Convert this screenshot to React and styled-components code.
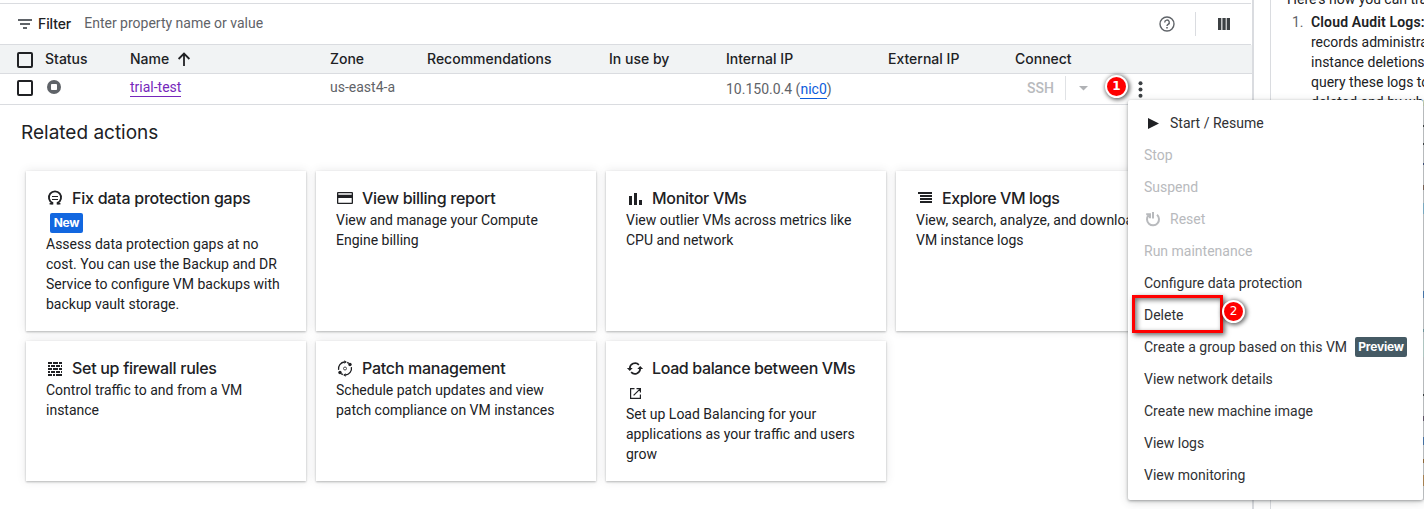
import React from "react";
import styled, { createGlobalStyle } from "styled-components";

const Global = createGlobalStyle`
  * { box-sizing: border-box; }
  body { margin: 0; background: #fff; overflow: hidden; font-family: Roboto, "Liberation Sans", sans-serif; font-size: 14px; line-height: 20px; color: #202124; }
`;
const heading = `font-family: "Product Sans", "Google Sans", Inter, Roboto, sans-serif;`;

const Page = styled.div`
  position: relative;
  display: flex;
  width: 1424px;
  height: 509px;
  overflow: hidden;
  background: #fff;
`;
const Main = styled.main`
  width: 1254px;
  flex: none;
  padding-top: 3px;
  border-right: 2px solid #dadce0;
`;
const FilterBar = styled.div`
  display: flex;
  align-items: center;
  height: 42px;
  border: solid #dadce0;
  border-width: 1px 0;
  margin-right: 1px;
  padding: 0 18px 0 16px;
`;
const FilterLabel = styled.span`
  ${heading}
  font-weight: 500;
  font-size: 14px;
  letter-spacing: -0.1px;
  margin: 0 13px 0 4px;
`;
const Placeholder = styled.span`
  color: #5f6368;
  flex: 1;
  margin-top: -2px;
`;
const ToolDivider = styled.i`
  width: 1px;
  height: 24px;
  background: #dadce0;
  margin: 0 19px 0 19px;
`;
const Row = styled.div`
  display: grid;
  grid-template-columns: 28px 85px 200px 97px 182px 117px 162px 127px 1fr;
  align-items: center;
  height: ${(p) => (p.$head ? 29 : 31)}px;
  padding: 0 0 ${(p) => (p.$head ? 0 : 4)}px 17px;
  margin-right: ${(p) => (p.$head ? 0 : 1)}px;
  background: ${(p) => (p.$head ? "#f1f3f4" : "#fff")};
  border-bottom: 1px solid #dadce0;
  color: #5f6368;
`;
const HeadCell = styled.span`
  ${heading}
  display: flex;
  align-items: center;
  gap: 6px;
  font-weight: 500;
  font-size: 14px;
  color: #202124;
  white-space: nowrap;
`;
const Checkbox = styled.span`
  width: 16px;
  height: 16px;
  margin-top: 2px;
  border: 2px solid #202124;
  border-radius: 2px;
`;
const StatusIcon = styled.svg`
  margin-left: 2px;
`;
const Cell = styled.span`
  white-space: nowrap;
  padding-top: ${(p) => p.$drop || 0}px;
`;
const Link = styled.a`
  display: inline-block;
  line-height: 18px;
  color: ${(p) => (p.$visited ? "#7627bb" : "#0b5bdc")};
  border-bottom: 1px solid currentColor;
`;
const Connect = styled.div`
  display: flex;
  align-items: center;
  color: #b8babd;
  font-weight: 500;
  margin-top: 2px;
  padding-left: 12px;
`;
const ConnectDivider = styled.i`
  width: 1px;
  height: 24px;
  background: #e0e2e5;
  margin: 0 13px 0 11px;
`;
const MoreIcon = styled.svg`
  margin: 2px 0 0 50px;
`;
const SectionTitle = styled.h2`
  ${heading}
  margin: 16px 0 0 21px;
  font-weight: 400;
  font-size: 19px;
  line-height: 24px;
`;
const Cards = styled.div`
  display: grid;
  grid-template-columns: repeat(4, 280px);
  grid-template-rows: 160px 140px;
  gap: 10px;
  padding: 26px 0 0 26px;
`;
const Card = styled.section`
  padding: 15px 20px;
  background: #fff;
  box-shadow: 0 1px 2px rgba(60, 64, 67, 0.35), 0 0 9px rgba(60, 64, 67, 0.13);
`;
const CardTitle = styled.h3`
  ${heading}
  display: flex;
  align-items: center;
  gap: 8px;
  height: 24px;
  margin: 0;
  font-size: 16px;
  font-weight: 500;
  white-space: nowrap;
  letter-spacing: ${(p) => p.$ls || 0}px;
  svg { flex: none; }
`;
const CardExtra = styled.div`
  display: flex;
  align-items: center;
  height: 24px;
  padding: 2px 0 0 4px;
`;
const Text = styled.p`
  margin: 0;
  white-space: pre;
`;
const Tag = styled.span`
  ${heading}
  display: inline-block;
  height: 20px;
  border-radius: 2px;
  background: ${(p) => (p.$dark ? "#455a64" : "#1267e0")};
  color: #fff;
  font-size: 12px;
  font-weight: 700;
  line-height: 20px;
  text-align: center;
  width: ${(p) => (p.$dark ? 52 : 33)}px;
  letter-spacing: -0.2px;
`;
const Aside = styled.aside`
  flex: none;
  width: 154px;
  margin-left: 16px;
  padding-left: 16px;
  border-left: 1px solid #dadce0;
  overflow: hidden;
  white-space: nowrap;
`;
const Intro = styled.p`
  margin: -11px 0 3px;
`;
const Numbered = styled.div`
  display: grid;
  grid-template-columns: 19px auto;
  padding-left: 5px;
`;
const Num = styled.span`
  color: #5f6368;
`;
const Strong = styled.b`
  font-weight: 600;
  letter-spacing: 0.15px;
`;
const Menu = styled.ul`
  position: absolute;
  left: 1128px;
  top: 100px;
  width: 295px;
  height: 400px;
  margin: 0;
  padding: 7px 0;
  list-style: none;
  background: #fff;
  border-radius: 2px;
  box-shadow: 0 1px 3px rgba(60, 64, 67, 0.45), 0 2px 10px rgba(60, 64, 67, 0.2);
`;
const Item = styled.li`
  display: flex;
  align-items: center;
  gap: 8px;
  height: 32px;
  padding-left: 16px;
  white-space: nowrap;
  color: ${(p) => (p.$off ? "#b8babd" : "#303134")};
`;
const Highlight = styled.div`
  position: absolute;
  left: 1132px;
  top: 295px;
  width: 91px;
  height: 38px;
  border: 3px solid #f00;
  box-shadow: 2px 2px 5px rgba(0, 0, 0, 0.6), inset 2px 2px 5px rgba(0, 0, 0, 0.55);
`;
const Step = styled.span`
  position: absolute;
  left: ${(p) => p.$x}px;
  top: ${(p) => p.$y}px;
  width: 23px;
  height: 23px;
  border: 2px solid #fff;
  border-radius: 50%;
  background: #f00;
  box-shadow: 1px 1px 4px 1px rgba(0, 0, 0, 0.6);
  color: #fff;
  font: ${(p) => (p.$bold ? "bold" : "normal")} 12px/19px "DejaVu Sans", sans-serif;
  text-align: center;
`;
const Edge = styled.div`
  position: absolute;
  left: 1423px;
  top: 100px;
  width: 1px;
  height: 400px;
  background: #dfe1e4;
`;
const Mark = styled.i`
  display: block;
  height: ${(p) => p.$h}px;
  margin-top: ${(p) => p.$gap}px;
  background: ${(p) => p.$c};
`;

const Icon = ({ size = 18, children, ...rest }) => (
  <svg width={size} height={size} viewBox="0 0 18 18" fill="#202124" {...rest}>{children}</svg>
);
const icons = {
  data: (
    <g fill="none" stroke="#202124" strokeWidth="1.8">
      <path d="M6.4 15.4V13.9A6.1 6.1 0 1 1 11.6 13.9V15.4" />
      <path d="M3.6 14.7H6.4M11.6 14.7H14.4" strokeWidth="1.4" />
      <path d="M6 7.5H12M6 10.5H12" strokeWidth="1.2" />
    </g>
  ),
  card: <path fillRule="evenodd" d="M2 3h14a1 1 0 0 1 1 1v10a1 1 0 0 1-1 1H2a1 1 0 0 1-1-1V4a1 1 0 0 1 1-1zM2.3 4.2v1.6h13.4V4.2zM2.3 9v4.8h13.4V9z" />,
  bars: <path d="M3 7h3v9H3zM8 4h3v12H8zM13 11h3v5h-3z" />,
  logs: <path d="M2 3h14v2H2zM4 6h12v2H4zM4 9h12v2H4zM4 12h12v2H4z" />,
  wall: <path d="M2 3h4v2H2zM7 3h5v2H7zM13 3h3v2h-3zM2 6h2v2H2zM5 6h4v2H5zM10 6h4v2h-4zM15 6h1v2h-1zM2 9h4v2H2zM7 9h5v2H7zM13 9h3v2h-3zM2 12h2v2H2zM5 12h4v2H5zM10 12h4v2h-4zM15 12h1v2h-1zM2 15h4v2H2zM7 15h2v2H7zM10 15h6v2h-6z" />,
  patch: (
    <g>
      <g fill="none" stroke="#202124" strokeWidth="1.3">
        <path d="M2.6 10.8A6.6 6.6 0 0 1 8.6 3M15.4 8.2A6.6 6.6 0 0 1 9.4 16" />
        <path d="M11.2 3.4 12.8 4.4M5.2 14.6 6.8 15.6" />
        <circle cx="9" cy="9.5" r="1.5" strokeWidth="0.8" />
      </g>
      <circle cx="14" cy="5.5" r="1.7" /><circle cx="4" cy="13.5" r="1.7" />
      <path d="M8.3 1.2 10.9 3 8.3 4.8zM9.7 14.2 7.1 16 9.7 17.8z" />
    </g>
  ),
  balance: (
    <g>
      <path d="M3.8 9.5A5.3 5.3 0 0 1 12.9 5.8M14.2 9.5A5.3 5.3 0 0 1 5.1 13.2" fill="none" stroke="#202124" strokeWidth="1.7" />
      <path d="M.9 9h5.8L3.8 12zM11.3 10h5.8L14.2 7z" />
    </g>
  ),
};

const cards = [
  { icon: "data", title: "Fix data protection gaps", ls: -0.25, tag: true, text: "Assess data protection gaps at no\ncost. You can use the Backup and DR\nService to configure VM backups with\nbackup vault storage." },
  { icon: "card", title: "View billing report", ls: -0.27, text: "View and manage your Compute\nEngine billing" },
  { icon: "bars", title: "Monitor VMs", ls: -0.3, text: "View outlier VMs across metrics like\nCPU and network" },
  { icon: "logs", title: "Explore VM logs", ls: -0.45, text: "View, search, analyze, and download\nVM instance logs" },
  { icon: "wall", title: "Set up firewall rules", ls: -0.3, text: "Control traffic to and from a VM\ninstance" },
  { icon: "patch", title: "Patch management", ls: -0.27, text: "Schedule patch updates and view\npatch compliance on VM instances" },
  { icon: "balance", title: "Load balance between VMs", ls: -0.37, external: true, text: "Set up Load Balancing for your\napplications as your traffic and users\ngrow" },
];
const marks = [
  [0, 6, "#d5e0c0"], [19, 2, "#3c4043"], [16, 2, "#3c4043"], [18, 2, "#3c4f86"], [20, 5, "#8a6a5a"],
  [13, 11, "#8ecbe8"], [77, 7, "#4a86c8"], [31, 3, "#7fb0b8"], [7, 18, "#d3efea"], [37, 2, "#3c4043"],
  [20, 5, "#6a5a72"], [16, 8, "#4a80c0"], [14, 4, "#a8763c"], [12, 11, "#c9975a"],
];

export default function App() {
  return (
    <Page>
      <Global />
      <Main>
        <FilterBar>
          <Icon fill="#5f6368"><path d="M2 4h14v2H2zM4 8h10v2H4zM7 12h4v2H7z" /></Icon>
          <FilterLabel>Filter</FilterLabel>
          <Placeholder>Enter property name or value</Placeholder>
          <Icon>
            <circle cx="9" cy="9" r="7" fill="none" stroke="#5f6368" strokeWidth="1.4" />
            <path d="M6.7 7.4a2.3 2.3 0 1 1 3.4 2c-.8.5-1.1.8-1.1 1.7" fill="none" stroke="#5f6368" strokeWidth="1.4" />
            <path d="M8.2 12h1.6v1.6H8.2z" fill="#5f6368" />
          </Icon>
          <ToolDivider />
          <Icon fill="#3c4043"><path d="M3 3h3.3v12H3zM7.4 3h3.3v12H7.4zM11.7 3H15v12h-3.3z" /></Icon>
        </FilterBar>
        <Row $head>
          <Checkbox />
          <HeadCell>Status</HeadCell>
          <HeadCell>Name
            <Icon><path d="M9 16V3.5M3.6 9 9 3.6 14.4 9" fill="none" stroke="#202124" strokeWidth="1.8" /></Icon>
          </HeadCell>
          <HeadCell>Zone</HeadCell>
          <HeadCell>Recommendations</HeadCell>
          <HeadCell>In use by</HeadCell>
          <HeadCell>Internal IP</HeadCell>
          <HeadCell>External IP</HeadCell>
          <HeadCell>Connect</HeadCell>
        </Row>
        <Row>
          <Checkbox />
          <StatusIcon width="14" height="14" viewBox="0 0 14 14">
            <circle cx="7" cy="7" r="7" fill="#5f6368" />
            <rect x="4" y="4" width="6" height="6" rx="0.8" fill="#fff" />
          </StatusIcon>
          <Cell><Link $visited>trial-test</Link></Cell>
          <Cell>us-east4-a</Cell>
          <span />
          <span />
          <Cell $drop={3}>10.150.0.4 (<Link>nic0</Link>)</Cell>
          <span />
          <Connect>
            SSH
            <ConnectDivider />
            <svg width="9" height="5" viewBox="0 0 9 5"><path d="M0 0h9L4.5 4.5z" fill="#b0b2b5" /></svg>
            <MoreIcon width="5" height="17" viewBox="0 0 5 17" fill="#3c4043">
              <circle cx="2.5" cy="2.3" r="2" /><circle cx="2.5" cy="8.5" r="2" /><circle cx="2.5" cy="14.7" r="2" />
            </MoreIcon>
          </Connect>
        </Row>
        <SectionTitle>Related actions</SectionTitle>
        <Cards>
          {cards.map((c) => (
            <Card key={c.title}>
              <CardTitle $ls={c.ls}><Icon>{icons[c.icon]}</Icon>{c.title}</CardTitle>
              {c.tag && <CardExtra><Tag>New</Tag></CardExtra>}
              {c.external && (
                <CardExtra>
                  <svg width="11" height="11" viewBox="0 0 11 11" fill="none" stroke="#202124" strokeWidth="1.2">
                    <path d="M4.5.6H.6v9.8h9.8V6.5M6.5.6h3.9v3.9M10.2.8 3.6 7.4" />
                  </svg>
                </CardExtra>
              )}
              <Text>{c.text}</Text>
            </Card>
          ))}
        </Cards>
      </Main>
      <Aside>
        <Intro>Here's how you can track</Intro>
        <Numbered>
          <Num>1.</Num>
          <div>
            <Strong>Cloud Audit Logs:</Strong><br />
            records administrative<br />
            instance deletions.<br />
            query these logs to<br />
            deleted and by whom
          </div>
        </Numbered>
      </Aside>
      <Edge>{marks.map(([gap, h, c], i) => <Mark key={i} $gap={gap} $h={h} $c={c} />)}</Edge>
      <Menu>
        <Item>
          <Icon><path d="M4 4 15 9.5 4 15z" /></Icon>Start / Resume
        </Item>
        <Item $off>Stop</Item>
        <Item $off>Suspend</Item>
        <Item $off>
          <Icon><g fill="none" stroke="#b8babd" strokeWidth="2"><path d="M13 4.8A6 6 0 1 1 4.6 5.2M9 2v6.5M2.2 4.3H6v4" /></g></Icon>Reset
        </Item>
        <Item $off>Run maintenance</Item>
        <Item>Configure data protection</Item>
        <Item>Delete</Item>
        <Item>Create a group based on this VM<Tag $dark>Preview</Tag></Item>
        <Item>View network details</Item>
        <Item>Create new machine image</Item>
        <Item>View logs</Item>
        <Item>View monitoring</Item>
      </Menu>
      <Highlight />
      <Step $x={1105} $y={75} $bold>1</Step>
      <Step $x={1222} $y={300}>2</Step>
    </Page>
  );
}
